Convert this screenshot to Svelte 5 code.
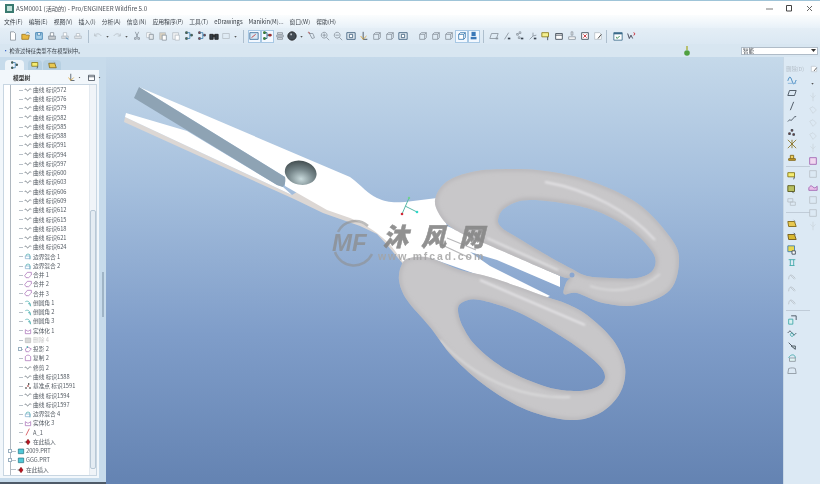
<script>
  const G = '#8a949e', B = '#3f7fb0', T = '#3aa6a6', P = '#a060b0', Y = '#d8b838', D = '#3a4450', R = '#c8202a', L = '#b8c0c8';
  const I = {
    doc: [['M3 1h4l2 2v8H3z', '#fff', G]],
    open: [['M1 4h4l1 1h4l-1 5H1z', '#e8b840', '#a07820'], ['M6 3c1-2 3-2 4 0', 'none', B]],
    save: [['M2 2h8v8H2z', '#a8d0e8', B], ['M4 2h4v3H4z', '#fff', B]],
    print: [['M2 6h8v4H2z', '#c8ccd0', G], ['M4 2h4v4H4z', '#fff', G]],
    printb: [['M2 6h8v3H2z', '#d4d8dc', L], ['M4 2h4v4H4z', '#fff', L], ['M7 8l3 2', 'none', B]],
    printc: [['M2 6h8v3H2z', '#e0e4e8', L], ['M4 3h4v3H4z', '#fff', L]],
    undo: [['M2 6c2-4 6-3 8 0', 'none', L], ['M2 3v3h3', 'none', L]],
    redo: [['M10 6c-2-4-6-3-8 0', 'none', L], ['M10 3v3H7', 'none', L]],
    cut: [['M4 1l3 7M8 1L5 8', 'none', G], ['M3 8h2v2H3zM7 8h2v2H7z', 'none', G]],
    copy: [['M2 2h5v6H2z', '#fff', L], ['M5 4h5v6H5z', '#e4e8ec', G]],
    paste: [['M2 2h7v8H2z', '#d8d0c0', L], ['M5 5h5v6H5z', '#fff', G]],
    pastb: [['M2 2h7v8H2z', '#eef0f2', L], ['M5 5h5v6H5z', '#fff', L]],
    regen: [['M2 1h2v2H2zM2 8h2v2H2zM8 4h2v2H8z', '#50a050', D], ['M4 2h3v7H4M7 5h1', 'none', B]],
    regenb: [['M2 1h2v2H2zM2 8h2v2H2zM8 4h2v2H8z', '#d05060', D], ['M4 2h3v7H4M7 5h1', 'none', B]],
    find: [['M1 4h4v6H1zM7 4h4v6H7z', '#333c44', '#222'], ['M5 5h2v2H5z', '#555', '#222']],
    sel: [['M2 3h8v6H2z', 'none', L]],
    view: [['M1 2h10v8H1z', '#d8e8f4', '#3a6a98'], ['M3 8l5-4', 'none', '#c03030']],
    tree: [['M2 1h2v2H2zM2 8h2v2H2z', '#50b050', '#206020'], ['M8 4h3v2H8z', '#d03030', '#802020'], ['M4 2h2v7H4M6 5h2', 'none', '#206080']],
    layer: [['M3 2h6v2H3zM2 5h8v2H2zM3 8h6v2H3z', '#e0e4e8', G]],
    ball: [['M6 1a5 5 0 1 0 .01 0z', '#444c54', '#222'], ['M4 3h2v2H4z', '#c0c4c8', 'none']],
    hand: [['M3 3l3 6 3-1-2-5zM1 2l3 1', 'none', G], ['M2 1l1 2', 'none', '#c03030']],
    zin: [['M5 1.5a3.5 3.5 0 1 0 .01 0zM7.5 7.5L11 11M3 5h4M5 3v4', 'none', G]],
    zout: [['M5 1.5a3.5 3.5 0 1 0 .01 0zM7.5 7.5L11 11M3 5h4', 'none', G]],
    refit: [['M1 2h10v8H1z', '#e8f0f6', '#3a5a78'], ['M4 4h4v4H4z', '#fff', '#3a5a78']],
    orient: [['M5 1v9h5', 'none', D], ['M2 6l3 4 4-4', 'none', '#d8a030']],
    cube: [['M2 4h6v6H2zM2 4l2-2h6v6l-2 2M8 4l2-2', 'none', G]],
    cubes: [['M2 4h6v6H2zM2 4l2-2h6v6l-2 2M8 4l2-2', '#fff', '#3a7ab0']],
    sphere: [['M3 1h5v5H3z', '#3a78b8', 'none'], ['M2 7h7v3H2z', '#3a78b8', 'none']],
    plane: [['M3 3h8L9 9H1z', 'none', G], ['M8 8h3v2H8z', G, 'none']],
    axis: [['M3 10L8 2', 'none', G], ['M7 8h3v2H7z', D, 'none']],
    pts: [['M2 3h2v2H2zM5 1h2v2H5zM4 7h2v2H4z', 'none', G], ['M7 8h3v2H7z', D, 'none']],
    csys: [['M2 10L6 6M6 2v4M6 6l4-1', 'none', G], ['M7 8h3v2H7z', D, 'none']],
    note: [['M1 2h8v5H1z', '#f4f090', '#887818'], ['M8 7v4', 'none', D]],
    table: [['M2 3h8v7H2zM2 5h8', '#fff', D]],
    stamp: [['M5 1h2v4H5zM2 7h8v3H2z', '#fff', G]],
    win: [['M2 2h8v8H2z', '#fff', D], ['M4 4l4 4M8 4l-4 4', 'none', R]],
    fam: [['M2 2h6l2 2v6H2z', '#fff', L], ['M6 9l4-5', 'none', '#222']],
    check: [['M1 2h10v9H1z', '#fff', '#3a6a8a'], ['M1 2h10v2H1z', '#3a6a8a', 'none'], ['M4 7l1 2 3-3', 'none', '#208040']],
    help: [['M2 3l2 6 2-4 2 4', 'none', '#334'], ['M9 2a1.500 1.500 0 1 1 0 3', 'none', R]],
    sine: [['M1 7c2-6 3-6 5 0s3 4 5-1', 'none', '#2a78b8'], ['M1 10h10', 'none', '#80b0d8']],
    para: [['M3 3h8L9 9H1z', 'none', D]],
    line: [['M4 11L8 1', 'none', D]],
    curve: [['M1 9c3-4 3 0 5-2s2-4 5-4', 'none', D]],
    ptsr: [['M2 7h2v2H2zM5 3h2v2H5zM7 8h2v2H7z', '#a04030', D]],
    star: [['M1 1l10 10M11 1L1 11M6 1v10', 'none', '#887020']],
    anal: [['M2 8h8v2H2z', '#d8a830', '#7a6010'], ['M4 4h4v4H4z', '#f0d060', '#7a6010']],
    ynote: [['M1 2h8v5H1z', '#f4ec70', '#807010'], ['M9 7l-1 3', 'none', D]],
    ygrp: [['M1 2h8v7H1z', '#b8c060', '#505010'], ['M6 9l2 2', 'none', D]],
    ghost: [['M1 2h6v4H1zM4 6h6v4H4z', 'none', L]],
    fold: [['M1 3h8l2 6H2z', '#e8c850', '#7a6010'], ['M8 1l2 2', 'none', G]],
    foldb: [['M1 3h8l2 6H2z', '#d8b830', '#6a5010'], ['M8 1l2 2', 'none', D]],
    sheet: [['M1 1h8v7H1z', '#e8d850', '#3a7ab0'], ['M6 7h4v4H6z', '#fff', D]],
    ubar: [['M2 2h8M4 2v7M8 2v7M3 9h6', 'none', T]],
    ray: [['M2 10c0-5 3-8 8-1M4 5l5 5', 'none', L]],
    mirror: [['M2 5h5v6H2z', '#d8f0f0', T], ['M5 1h6v5', 'none', D]],
    wave: [['M1 6c2-3 3-3 5 0s3 3 5 0', 'none', D], ['M6 6a2 2 0 1 0 .01 0z', 'none', T]],
    trim: [['M2 2l7 7', 'none', D], ['M5 6l5 4V6z', '#d0e4e4', D]],
    blend: [['M2 6c2-5 8-5 8 0', 'none', T], ['M3 6h7v4H3z', '#e0f4f4', G]],
    frame: [['M2 3c3-1 6-1 8 0l1 6H1z', 'none', G]],
    box: [['M2 2h8v8H2z', 'none', L]],
    pbox: [['M2 2h8v8H2z', '#f0d8f0', P]],
    pwave: [['M1 7c2-3 3-3 5-1s3 1 5-1l0 5H1z', '#e8c0e8', P]],
    faint: [['M2 4l4-2 4 4-4 4z', 'none', '#ccd6de']],
    fcol: [['M6 1v10M3 4l3 3 3-3', 'none', '#ccd6de']],
    drop: [['M4 5h4l-2 3z', '#555', 'none']],
    cv: [['M1 6c1-2 2-2 3 0s2 2 3 0 2-2 4-1', 'none', '#56606a']],
    tblend: [['M3 6a3 3 0 1 1 6 0v5', 'none', T], ['M2 6h7v4H2z', 'none', '#7aa8c8']],
    merge: [['M1 7l4-5h6v4l-4 4H3z', 'none', P]],
    round: [['M2 4c4-2 7 0 8 7M6 7h3v3', 'none', T]],
    solid: [['M2 4l3 2 2 0 3-2v6H2z', 'none', P]],
    hid: [['M2 3h8v7H2z', '#d8d8d8', '#bbb']],
    proj: [['M2 6l4-3 5 3-4 4H3z', 'none', P], ['M4 2h2v2H4z', T, 'none']],
    copyt: [['M2 4c2-3 6-3 8 0v6H2z', 'none', P]],
    dpt: [['M2 8h2v2H2zM6 2h2v2H6zM8 8h2v2H8z', '#333', 'none'], ['M5 5h2v2H5z', '#a03030', 'none']],
    a1: [['M3 11L8 1', 'none', R]],
    ins: [['M6 2l3 4-3 4-3-4z', '#c01020', '#801010'], ['M1 6h4', 'none', '#333']],
    part: [['M2 3h8v7H2z', '#50c8d8', '#207080']]
  };

  const tools = [
    ['doc', 6.5, 13], ['open', 0, 13], ['save', 0, 13], ['print', 0, 13], ['printb', 0, 13], ['printc', 0, 12.5],
    ['|', 4], ['undo', 4, 10], ['drop', 0, 8], ['redo', 0, 11], ['drop', 0, 8], ['cut', 0, 13], ['copy', 0, 13], ['paste', 0, 13], ['pastb', 0, 13], ['regen', 0, 13], ['regenb', 0, 13], ['find', 0, 12], ['sel', 0, 12], ['drop', 0, 6],
    ['|', 5], ['view', 3.5, 13, 1], ['tree', 0, 13, 1], ['layer', 0, 13], ['ball', 0, 11], ['drop', 0, 7], ['hand', 0.5, 13], ['zin', 0, 13], ['zout', 0, 13], ['refit', 0, 13], ['orient', 0, 13], ['cube', 0, 13], ['cube', 0, 13], ['refit', 0, 13], ['cube', 7, 13], ['cube', 0, 13], ['cube', 0, 13], ['cubes', 0, 13, 1], ['sphere', 0, 12, 1],
    ['|', 3], ['plane', 3, 13], ['axis', 0, 13], ['pts', 0, 13], ['csys', 0, 13], ['note', 0, 13], ['table', 0, 13], ['stamp', 0, 13], ['win', 0, 13], ['fam', 0, 13],
    ['|', 2], ['check', 4, 13], ['help', 0, 13]
  ];

  const rightA = ['sine', 'para', 'line', 'curve', 'ptsr', 'star', 'anal', '-', 'ynote', 'ygrp', 'ghost', '=', 'fold', 'foldb', 'sheet', 'ubar', 'ray', 'ray', 'ray', '-', 'mirror', 'wave', 'trim', 'blend', 'frame'];
  const rightB = ['drop', 'fcol', 'faint', 'faint', 'faint', 'fcol', 'pbox', 'box', 'pwave', 'box', 'box', 'fcol'];

  const curveIds = [572, 576, 579, 582, 585, 588, 591, 594, 597, 600, 603, 606, 609, 612, 615, 618, 621, 624];
  const rows = [
    ...curveIds.map((n) => ['cv', '曲线 标识' + n, 1]),
    ['tblend', '边界混合 1', 1], ['tblend', '边界混合 2', 1],
    ['merge', '合并 1', 1], ['merge', '合并 2', 1], ['merge', '合并 3', 1],
    ['round', '倒圆角 1', 1], ['round', '倒圆角 2', 1], ['round', '倒圆角 3', 1],
    ['solid', '实体化 1', 1], ['hid', '删除 4', 1, 'off'], ['proj', '投影 2', 1, 'plus'], ['copyt', '复制 2', 1], ['cv', '修剪 2', 1],
    ['cv', '曲线 标识1588', 1], ['dpt', '基准点 标识1591', 1], ['cv', '曲线 标识1594', 1], ['cv', '曲线 标识1597', 1],
    ['tblend', '边界混合 4', 1], ['solid', '实体化 3', 1], ['a1', 'A_1', 1], ['ins', '在此插入', 1],
    ['part', '2009.PRT', 0, 'plus'], ['part', 'GGG.PRT', 0, 'plus'], ['ins', '在此插入', 0]
  ];

  const menu = ['文件(F)', '编辑(E)', '视图(V)', '插入(I)', '分析(A)', '信息(N)', '应用程序(P)', '工具(T)', 'eDrawings', 'Manikin(M)...', '窗口(W)', '帮助(H)'];

  function spline(p) {
    let d = `M${p[0][0]} ${p[0][1]}`;
    const n = p.length;
    for (let i = 0; i < n; i++) {
      const a = p[(i - 1 + n) % n], b = p[i], c = p[(i + 1) % n], e = p[(i + 2) % n];
      d += `C${(b[0] + (c[0] - a[0]) / 6).toFixed(1)} ${(b[1] + (c[1] - a[1]) / 6).toFixed(1)} ${(c[0] - (e[0] - b[0]) / 6).toFixed(1)} ${(c[1] - (e[1] - b[1]) / 6).toFixed(1)} ${c[0]} ${c[1]}`;
    }
    return d + 'Z';
  }

  const upperOuter = [[435, 200], [441, 187], [453, 178], [472, 172], [493, 169.500], [537, 170], [587, 180], [637, 203], [670, 237], [679, 260], [670, 290], [637, 305], [603, 303], [577, 293], [564, 294], [566, 283], [570, 277], [560, 276], [493, 247], [463, 234], [447, 224], [438, 212]];
  const upperHole = [[498, 220], [505, 208], [530, 200], [587, 208], [627, 227], [653, 253], [653, 270], [637, 278], [610, 278], [587, 276], [570, 268], [543, 253], [513, 235], [502, 228]];
  const lowerOuter = [[402, 264], [410, 258], [430, 258], [460, 270], [493, 278], [547, 297], [567, 304], [587, 315], [613, 340], [625, 367], [620, 393], [600, 413], [570, 420], [527, 410], [487, 387], [453, 357], [430, 327], [407, 300], [399, 280]];
  const lowerHole = [[458, 310], [463, 302], [480, 300], [520, 313], [567, 340], [597, 363], [605, 377], [597, 387], [577, 391], [547, 387], [507, 370], [477, 347], [463, 327]];
  const handleU = spline(upperOuter) + spline(upperHole);
  const handleL = spline(lowerOuter) + spline(lowerHole);
</script>

{#snippet ic(kind, size = 10)}
  <svg class="ic" width={size} height={size} viewBox="0 0 12 12" stroke-width="1">
    {#each I[kind] as s}<path d={s[0]} fill={s[1]} stroke={s[2]} />{/each}
  </svg>
{/snippet}

<div class="app">
  <header class="title">
    <svg width="9" height="9" viewBox="0 0 9 9"><rect width="9" height="9" fill="#3a7a70" /><rect x="2" y="2" width="5" height="5" fill="#bfe0d8" /></svg>
    <span class="t">ASM0001 (活动的) - Pro/ENGINEER Wildfire 5.0</span>
    <span class="wbtns">
      <svg width="7" height="7" viewBox="0 0 7 7"><path d="M0 4h7" stroke="#777" /></svg>
      <svg width="7" height="7" viewBox="0 0 7 7"><path d="M.5.5h5v5.500h-5z" stroke="#444" fill="none" /></svg>
      <svg width="7" height="7" viewBox="0 0 7 7"><path d="M1 1l5 5M6 1l-5 5" stroke="#666" fill="none" /></svg>
    </span>
  </header>

  <nav class="menu">
    {#each menu as m}<span>{m}</span>{/each}
  </nav>

  <div class="tools">
    {#each tools as t}
      {#if t[0] === '|'}
        <i class="sep" style:margin-left="{t[1]}px"></i>
      {:else}
        <span class="tool" class:on={t[3]} style:width="{t[2]}px" style:margin-left="{t[1]}px">{@render ic(t[0], t[0] === 'drop' ? 7 : 10)}</span>
      {/if}
    {/each}
  </div>

  <div class="status">
    <span class="msg"><b>•</b> 检查过特征类型不在模型树中。</span>
    <svg class="light" width="6" height="10" viewBox="0 0 6 10"><rect x="2" y="0" width="2" height="4" fill="#b8c070" /><circle cx="3" cy="7" r="2.800" fill="#50a040" /></svg>
    <span class="combo">智能<svg width="5" height="5" viewBox="0 0 5 5"><path d="M0 1h5L2.500 4z" fill="#333" /></svg></span>
  </div>

  <div class="main">
    <aside class="left">
      <div class="tabs">
        <span class="tab on">{@render ic('regen', 9)}</span>
        <span class="tab">{@render ic('ynote', 9)}</span>
        <span class="tab wide">{@render ic('fold', 9)}</span>
      </div>
      <div class="panel">
        <div class="phead">
          <b>模型树</b>
          <span class="pbtns">{@render ic('orient', 9)}{@render ic('drop', 5)}<em></em>{@render ic('table', 9)}{@render ic('drop', 5)}</span>
        </div>
        <div class="treewrap">
          <div class="tree">
            {#each rows as r}
              <div class="row" class:deep={r[2]} class:off={r[3] === 'off'}>
                {#if r[3] === 'plus'}<i class="plus"></i>{/if}
                <i class="dash"></i>
                {@render ic(r[0], 8)}
                <span>{r[1]}</span>
              </div>
            {/each}
          </div>
          <div class="scroll"><i class="thumb"></i></div>
        </div>
      </div>
      <div class="splitter"></div>
    </aside>

    <section class="view">
      <svg class="scene" width="677" height="427" viewBox="106 57 677 427">
        <defs>
          <filter id="b2" x="-20%" y="-20%" width="140%" height="140%"><feGaussianBlur stdDeviation="2" /></filter>
          <filter id="b1" x="-20%" y="-20%" width="140%" height="140%"><feGaussianBlur stdDeviation="1" /></filter>
          <radialGradient id="hole" cx=".55" cy=".75" r=".8"><stop offset="0" stop-color="#c8dadc" /><stop offset=".5" stop-color="#76868a" /><stop offset="1" stop-color="#3c4648" /></radialGradient>
          <clipPath id="cu"><path d={handleU} clip-rule="evenodd" /></clipPath>
          <clipPath id="cl"><path d={handleL} clip-rule="evenodd" /></clipPath>
        </defs>

        <path d="M125 117L124 122 294 199 323 213 360 226 377 234 388 246 403 264 420 262 400 232 300 190 292 195z" fill="#dcd7d4" />
        <path d="M126 113L187 131 277 185 283 187 292 195 125 117z" fill="#fff" />
        <path d="M139 87L350 177C362 186 368 194 377 198S392 203 405 202L437 198 447 226 493 246 560 276 560 287 497 260 470 252 490 266 550 296 545 298 430 258 403 262C395 250 388 242 383 238 375 231 365 224 350 218L327 210 285 186 285 177z" fill="#fff" />
        <path d="M139 87L134 98 277 185 283 187C285 184 286 181 285 177z" fill="#8ea3b4" />
        <ellipse cx="300.700" cy="172.700" rx="16" ry="12" transform="rotate(12 300.700 172.700)" fill="url(#hole)" />
        <path d="M447 238L476 250M440 244L470 258" stroke="#b8b8ba" stroke-width="1.200" fill="none" />

        <path d={handleU} fill="#c8c7c9" fill-rule="evenodd" />
        <g clip-path="url(#cu)">
          <path d={spline(upperOuter)} fill="none" stroke="#b5b4b7" stroke-width="3.500" filter="url(#b2)" />
          <path d={spline(upperHole)} fill="none" stroke="#b0afb2" stroke-width="3.500" filter="url(#b2)" />
          <path d="M545 182C590 190 630 212 655 240" fill="none" stroke="#e6e5e8" stroke-width="1.800" filter="url(#b1)" />
          <path d="M487 238L558 270" fill="none" stroke="#efeff1" stroke-width="1.300" filter="url(#b1)" />
          <path d="M590 286C610 293 640 292 660 274" fill="none" stroke="#dcdcdd" stroke-width="1.600" filter="url(#b1)" />
        </g>
        <path d={handleL} fill="#c8c7c9" fill-rule="evenodd" />
        <g clip-path="url(#cl)">
          <path d={spline(lowerOuter)} fill="none" stroke="#b5b4b7" stroke-width="3.500" filter="url(#b2)" />
          <path d={spline(lowerHole)} fill="none" stroke="#b0afb2" stroke-width="3.500" filter="url(#b2)" />
          <path d="M480 280L585 325" fill="none" stroke="#ecebee" stroke-width="1.600" filter="url(#b1)" />
          <path d="M440 340C470 375 520 400 570 397" fill="none" stroke="#dcdcdd" stroke-width="1.800" filter="url(#b1)" />
        </g>
        <circle cx="572" cy="275" r="2.500" fill="#8aa6d0" />

        <path d="M402 214L409 198M405 206L417 212" stroke="#58b8a8" stroke-width="1" fill="none" />
        <circle cx="402" cy="214" r="1.300" fill="#d02838" />
        <circle cx="409" cy="198" r="1.200" fill="#70d090" />
        <circle cx="417" cy="212" r="1.300" fill="#30d8c8" />

        <g class="mark">
          <path d="M338 232A19 19 0 0 1 368 226M335 252A20 20 0 0 0 372 254" fill="none" stroke="#8f8f8f" stroke-width="2.500" opacity=".6" />
          <text x="332" y="251" class="mf">MF</text>
          <text x="383" y="246" class="cn">沐风网</text>
          <text x="378" y="260" class="en">www.mfcad.com</text>
        </g>
      </svg>
    </section>

    <aside class="right">
      <div class="rtop"><span>删除(D)</span>{@render ic('fam', 8)}</div>
      <div class="rcols">
        <div class="rcol">
          {#each rightA as k}
            {#if k === '-'}<i class="hsep"></i>{:else if k === '='}<i class="hsep big"></i>{:else}<span class="ri">{@render ic(k, 10)}</span>{/if}
          {/each}
        </div>
        <div class="rcol b">
          {#each rightB as k}<span class="ri">{@render ic(k, k === 'drop' ? 7 : 10)}</span>{/each}
        </div>
      </div>
    </aside>
  </div>
</div>

<style>
  :global(body) { margin: 0; background: #4a5560; }
  .app {
    width: 820px; height: 484px; box-sizing: border-box; overflow: hidden;
    display: flex; flex-direction: column;
    font: 5.800px "Noto Sans CJK SC", "Liberation Sans", sans-serif; color: #3a4048;
    background: #dbe8f3; border-top: 1px solid #9fc4d8; filter: blur(.3px);
  }
  .ic { display: block; flex: none; }
  .title { height: 14px; flex: none; background: #fff; display: flex; align-items: center; padding: 0 7px 0 5px; gap: 2px; }
  .t { font-size: 6.200px; color: #4a5058; }
  .wbtns { margin-left: auto; display: flex; gap: 13px; }
  .menu { height: 13px; flex: none; display: flex; align-items: center; gap: 6px; padding-left: 4px; background: linear-gradient(#fbfdfe, #e8f1f8); }
  .tools { height: 16px; flex: none; display: flex; align-items: center; background: linear-gradient(#e4eef6, #dbe8f3); }
  .tool { display: flex; justify-content: center; align-items: center; height: 13px; box-sizing: border-box; flex: none; }
  .tool.on { background: #f2f8ff; box-shadow: inset 0 0 0 1px #a8c8e4; }
  .sep { width: 1px; height: 13px; background: #aebfce; flex: none; }
  .status { height: 13px; flex: none; display: flex; align-items: center; padding-left: 3px; background: #d8e6f1; font-size: 5.300px; }
  .msg b { color: #2050c0; }
  .light { margin-left: auto; margin-right: 51px; }
  .combo { width: 77px; height: 8px; box-sizing: border-box; background: #fff; border: 1px solid #b0bcc8; display: flex; justify-content: space-between; align-items: center; padding: 0 1px; margin-right: 2px; font-size: 5.500px; }
  .main { flex: 1; display: flex; min-height: 0; }
  .left { width: 106px; flex: none; background: #c7dbeb; position: relative; padding-top: 3px; box-sizing: border-box; display: flex; flex-direction: column; border-bottom: 2px solid #4e5a68; }
  .tabs { height: 10px; display: flex; padding-left: 5px; gap: 4px; flex: none; }
  .tab { width: 14px; background: #b6d0e2; border-radius: 4px 4px 0 0; display: flex; justify-content: center; align-items: center; }
  .tab.on { width: 19px; background: #eef4f9; }
  .tab.wide { width: 18px; margin-left: -3px; }
  .panel { width: 99px; margin-bottom: 4px; flex: 1; background: #f2f7fb; display: flex; flex-direction: column; min-height: 0; }
  .phead { height: 14px; flex: none; display: flex; align-items: center; padding-left: 13px; }
  .phead b { font-size: 5.800px; color: #333; white-space: nowrap; }
  .pbtns { margin-left: 37px; display: flex; align-items: center; gap: 1px; }
  .pbtns em { width: 3px; }
  .treewrap { flex: 1; margin: 0 2px 2px 3px; background: #fff; display: flex; border: 1px solid #c8d6e2; min-height: 0; overflow: hidden; }
  .tree { flex: 1; min-width: 0; background: linear-gradient(#b0b8c0, #b0b8c0) 5.500px 0 / 1px 100% no-repeat; }
  .row { height: 9.280px; display: flex; align-items: center; padding-left: 13px; position: relative; gap: 1px; white-space: nowrap; color: #555c64; font-size: 5.700px; line-height: 1; }
  .row.deep { padding-left: 20px; }
  .row.off { color: #c8c8c8; }
  .dash { width: 4px; height: 1px; background: #b8c0c8; position: absolute; left: 15px; top: 4.500px; }
  .row:not(.deep) .dash { left: 7px; width: 5px; }
  .plus { position: absolute; left: 4px; top: 2.500px; width: 4px; height: 4px; background: #fff; border: 1px solid #9ab0c0; box-sizing: border-box; z-index: 1; }
  .row.deep .plus { left: 14px; }
  .scroll { width: 6px; flex: none; background: #f0f4f8; position: relative; border-left: 1px solid #e4eaf0; }
  .thumb { position: absolute; left: 0; right: 0; top: 125px; bottom: 6px; background: #e4ecf3; border: 1px solid #b8c8d6; border-radius: 2px; box-sizing: border-box; }
  .splitter { position: absolute; left: 102px; top: 215px; width: 2px; height: 45px; background: #dfe9f1; border: 1px solid #9fb4c6; box-sizing: border-box; }
  .view { flex: 1; min-width: 0; background: linear-gradient(#c5d9ea, #a5bfdd 30%, #7f9dc9 65%, #6483b2); overflow: hidden; }
  .scene { display: block; }
  .mf { font: italic 700 24px "Liberation Sans", sans-serif; fill: #8c8c8c; opacity: .75; }
  .cn { font: italic 900 25px "Noto Sans CJK SC", sans-serif; fill: #868686; opacity: .9; letter-spacing: 13px; stroke: #868686; stroke-width: .5px; }
  .en { font: 700 10.500px "Liberation Sans", sans-serif; fill: #a4a4a4; opacity: .85; letter-spacing: 1.900px; }
  .right { width: 37px; flex: none; background: #dce9f4; padding: 8px 0 0 2px; box-sizing: border-box; border-left: 1px solid #c8d8e6; }
  .rtop { display: flex; justify-content: space-between; align-items: center; font-size: 5.400px; color: #b4bec8; height: 8px; margin-bottom: 1px; padding-right: 2px; }
  .rcols { display: flex; justify-content: space-between; padding-right: 2px; }
  .rcol { display: flex; flex-direction: column; width: 12px; }
  .rcol.b { padding-top: 3.500px; width: 11px; }
  .ri { height: 12.800px; display: flex; align-items: center; justify-content: center; flex: none; }
  .rcol.b .ri { height: 12.900px; }
  .hsep { height: 1px; margin: 2.500px 0; width: 24px; background: #c0ccd8; flex: none; }
  .hsep.big { margin: 4.500px 0; }
</style>
